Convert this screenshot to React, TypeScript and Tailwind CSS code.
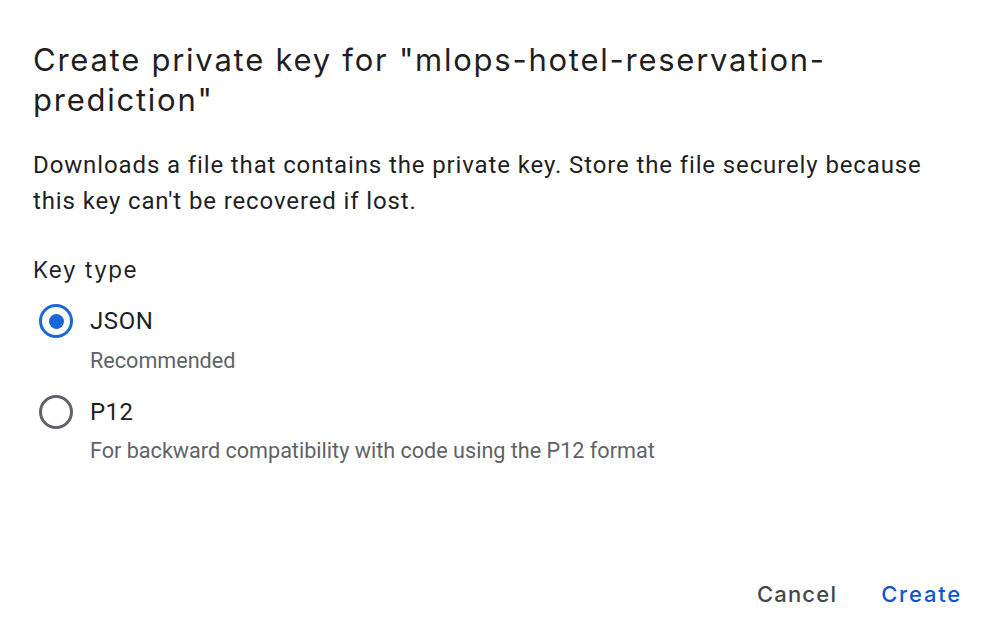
import React from "react";

function Radio({ checked }: { checked: boolean }) {
  return (
    <div
      className={
        "flex h-[34px] w-[34px] shrink-0 items-center justify-center rounded-full border-[3px] " +
        (checked ? "border-[#1a67d8]" : "border-[#5f6368]")
      }
    >
      {checked && <div className="h-[15px] w-[15px] rounded-full bg-[#1a67d8]" />}
    </div>
  );
}

const gs = { fontFamily: "Inter, 'Open Sans', Roboto, sans-serif" };

export default function App() {
  return (
    <div className="h-[632px] w-[990px] bg-white" style={{ fontFamily: "Roboto, 'Liberation Sans', sans-serif" }}>
      <div className="flex h-full flex-col px-[33px]">
        <h1 className="pt-[40px] text-[31px] leading-[40px] tracking-[1.75px] text-[#1f1f1f]" style={gs}>
          Create private key for "mlops-hotel-reservation-
          <br />
          prediction"
        </h1>
        <p className="mt-[27px] w-[920px] text-[24px] leading-[36px] tracking-[0.88px] text-[#1f1f1f]">
          Downloads a file that contains the private key. Store the file securely because this key can't be recovered if lost.
        </p>
        <div className="mt-[35px] text-[22.5px] leading-[32px] tracking-[1.5px] text-[#1f1f1f]" style={gs}>
          Key type
        </div>
        <div className="mt-[18px] flex items-center">
          <div className="ml-[6px]">
            <Radio checked />
          </div>
          <span className="ml-[17px] text-[24px] leading-[32px] tracking-[0.6px] text-[#1f1f1f]">JSON</span>
        </div>
        <div className="ml-[57px] mt-[9px] text-[21.6px] leading-[28px] text-[#5f6368]">Recommended</div>
        <div className="mt-[20px] flex items-center">
          <div className="ml-[6px]">
            <Radio checked={false} />
          </div>
          <span className="ml-[17px] text-[24px] leading-[32px] tracking-[0.4px] text-[#1f1f1f]">P12</span>
        </div>
        <div className="ml-[57px] mt-[8px] text-[21.6px] leading-[28px] text-[#5f6368]">
          For backward compatibility with code using the P12 format
        </div>
        <div className="mt-auto mb-[22px] flex justify-end gap-[44px]">
          <button className="text-[22px] font-medium leading-[32px] tracking-[1.2px] text-[#444746]" style={gs}>
            Cancel
          </button>
          <button className="mr-[-5px] text-[22px] font-medium leading-[32px] tracking-[1.8px] text-[#0b57d0]" style={gs}>
            Create
          </button>
        </div>
      </div>
    </div>
  );
}
